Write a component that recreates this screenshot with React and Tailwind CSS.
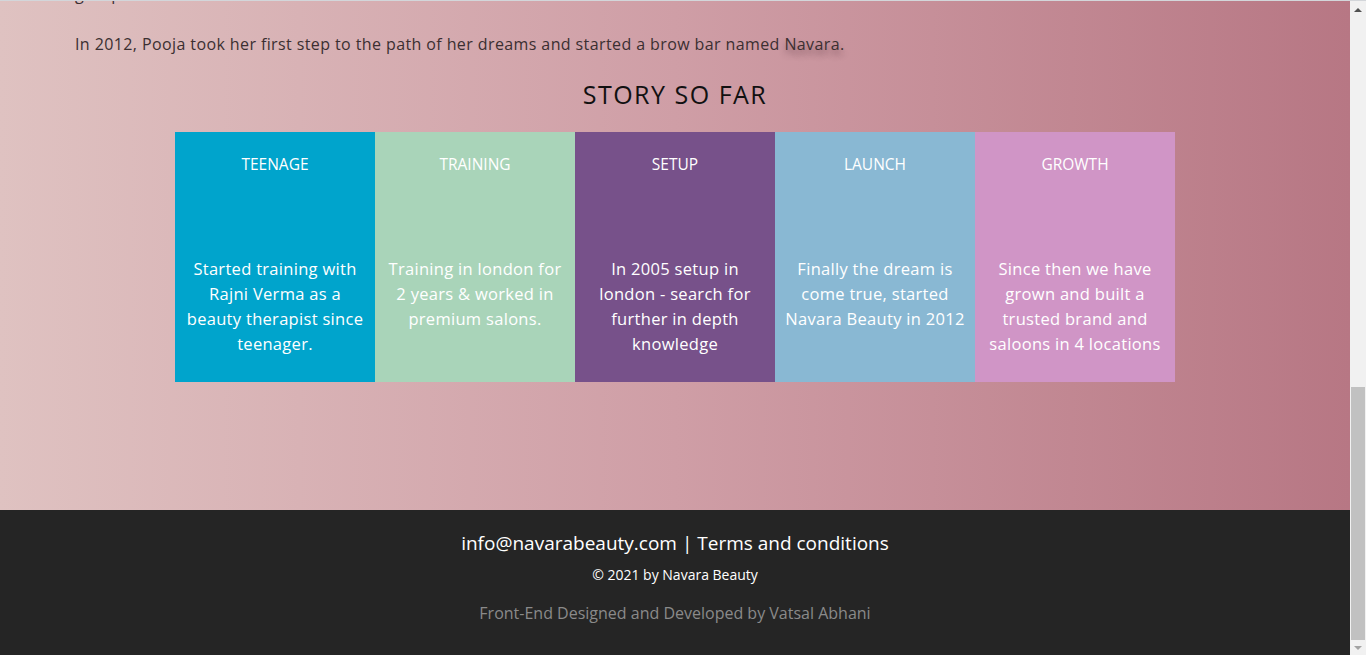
const stages = [
  {
    title: "TEENAGE",
    text: "Started training with Rajni Verma as a beauty therapist since teenager.",
    bg: "bg-[#00a4cc]",
  },
  {
    title: "TRAINING",
    text: "Training in london for 2 years & worked in premium salons.",
    bg: "bg-[#a9d4b9]",
  },
  {
    title: "SETUP",
    text: "In 2005 setup in london - search for further in depth knowledge",
    bg: "bg-[#77518a]",
  },
  {
    title: "LAUNCH",
    text: "Finally the dream is come true, started Navara Beauty in 2012",
    bg: "bg-[#89b8d3]",
  },
  {
    title: "GROWTH",
    text: "Since then we have grown and built a trusted brand and saloons in 4 locations",
    bg: "bg-[#d095c6]",
  },
];

function StageCard({ stage }) {
  return (
    <div className={`${stage.bg} w-[200px] h-[250px] flex flex-col items-center text-white text-center px-[10px] pt-[21px]`}>
      <h3 className="text-[15.5px] leading-[22px] h-[22px]">{stage.title}</h3>
      <p className="mt-[81px] text-[16.5px] leading-[25px] tracking-[0.3px]">{stage.text}</p>
    </div>
  );
}

function Scrollbar() {
  return (
    <div className="w-[16px] h-full bg-[#f1f1f1] flex flex-col items-center">
      <div className="h-[17px] flex items-center justify-center">
        <div className="w-0 h-0 border-l-[4px] border-r-[4px] border-b-[4px] border-l-transparent border-r-transparent border-b-[#505050]" />
      </div>
      <div className="flex-1 w-full flex flex-col justify-end px-[1px]">
        <div className="h-[253px] w-full bg-[#c1c1c1]" />
      </div>
      <div className="h-[15px] flex items-center justify-center">
        <div className="w-0 h-0 border-l-[4px] border-r-[4px] border-t-[4px] border-l-transparent border-r-transparent border-t-[#a3a3a3]" />
      </div>
    </div>
  );
}

export default function App() {
  return (
    <div
      className="w-full h-[655px] flex overflow-hidden border-t border-[#d3d6da]"
      style={{ fontFamily: "'Open Sans', 'Liberation Sans', sans-serif" }}
    >
      <div className="w-[1350px] h-full flex flex-col">
        <section className="h-[509px] bg-linear-to-r from-[#dfc2c1] via-[#cf9ea6] to-[#b77784] flex flex-col">
          {/* tail of the previous paragraph, scrolled off the top */}
          <div className="h-[3px] overflow-hidden px-[75px]">
            <p className="-mt-[19px] text-[16px] leading-[24px] tracking-[0.4px] text-[#3b2f31]">group</p>
          </div>
          <p className="mt-[28px] px-[75px] text-[16px] leading-[24px] tracking-[0.4px] text-[#3b2f31]">
            In 2012, Pooja took her first step to the path of her dreams and started a brow bar named{" "}
            <span className="[text-shadow:0_5px_6px_rgba(60,30,40,0.45)]">Navara.</span>
          </p>
          <h2 className="mt-[23px] text-center text-[25px] leading-[30px] tracking-[1.5px] font-medium text-[#111]">
            STORY SO FAR
          </h2>
          <div className="mt-[23px] flex justify-center">
            {stages.map((s) => (
              <StageCard key={s.title} stage={s} />
            ))}
          </div>
        </section>
        <footer className="flex-1 bg-[#252525] flex flex-col items-center text-center">
          <p className="mt-[21px] text-[19px] leading-[24px] text-white">
            info@navarabeauty.com | Terms and conditions
          </p>
          <p className="mt-[10px] text-[14px] leading-[20px] text-white">© 2021 by Navara Beauty</p>
          <p className="mt-[16px] text-[16px] leading-[24px] text-[#8a8a8a]">
            Front-End Designed and Developed by Vatsal Abhani
          </p>
        </footer>
      </div>
      <Scrollbar />
    </div>
  );
}
